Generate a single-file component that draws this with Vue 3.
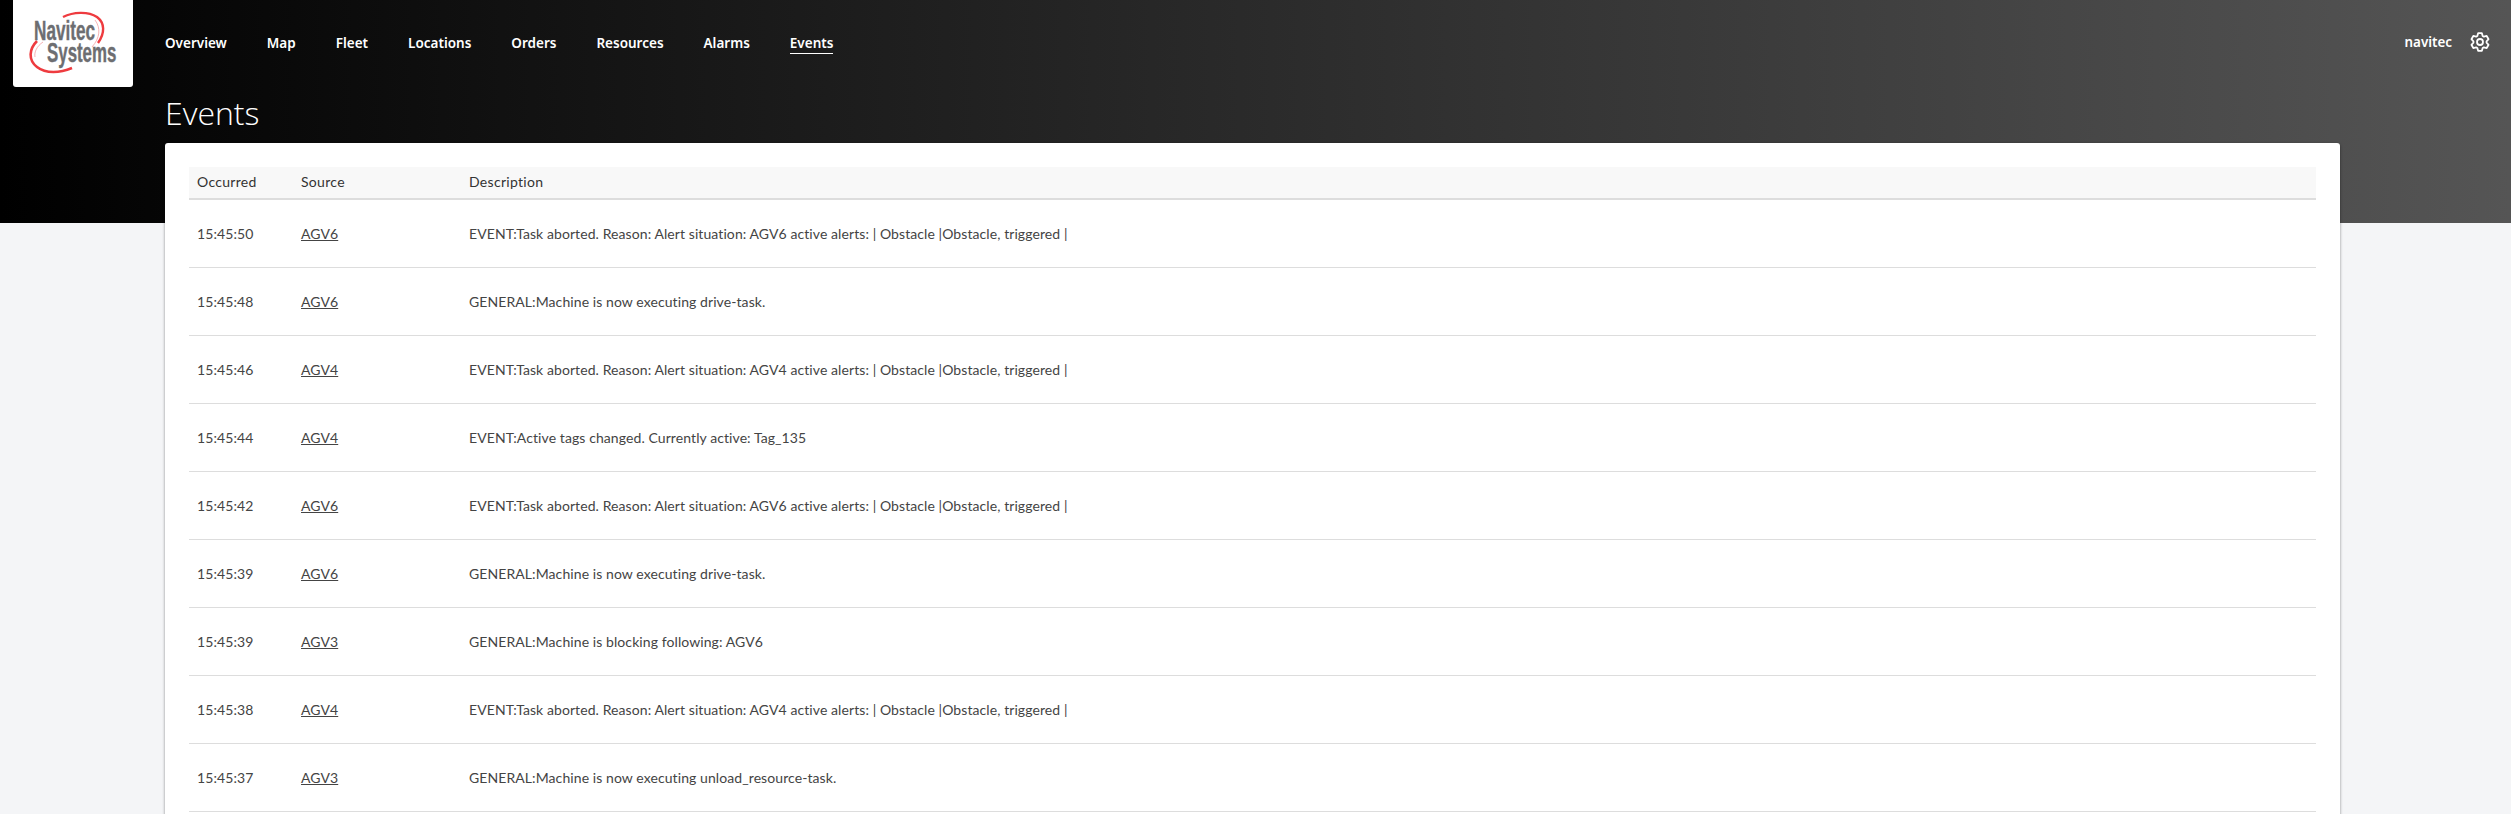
<script setup>
const links = ['Overview', 'Map', 'Fleet', 'Locations', 'Orders', 'Resources', 'Alarms', 'Events']

const taskAborted = (agv) => `EVENT:Task aborted. Reason: Alert situation: ${agv} active alerts: | Obstacle |Obstacle, triggered |`

const events = [
  { time: '15:45:50', source: 'AGV6', text: taskAborted('AGV6') },
  { time: '15:45:48', source: 'AGV6', text: 'GENERAL:Machine is now executing drive-task.' },
  { time: '15:45:46', source: 'AGV4', text: taskAborted('AGV4') },
  { time: '15:45:44', source: 'AGV4', text: 'EVENT:Active tags changed. Currently active: Tag_135' },
  { time: '15:45:42', source: 'AGV6', text: taskAborted('AGV6') },
  { time: '15:45:39', source: 'AGV6', text: 'GENERAL:Machine is now executing drive-task.' },
  { time: '15:45:39', source: 'AGV3', text: 'GENERAL:Machine is blocking following: AGV6' },
  { time: '15:45:38', source: 'AGV4', text: taskAborted('AGV4') },
  { time: '15:45:37', source: 'AGV3', text: 'GENERAL:Machine is now executing unload_resource-task.' },
]

// contorno da engrenagem: 6 dentes
const gearPoints = []
for (let i = 0; i < 6; i++) {
  const a = i * 60 - 90
  for (const [r, d] of [[6.6, -24], [9, -12], [9, 12], [6.6, 24]]) {
    const t = ((a + d) * Math.PI) / 180
    gearPoints.push(`${(r * Math.cos(t)).toFixed(2)},${(r * Math.sin(t)).toFixed(2)}`)
  }
}
const gear = gearPoints.join(' ')
</script>

<template>
  <div class="page">
    <header class="topbar">
      <a class="logo" href="#" aria-label="Navitec Systems">
        <svg width="120" height="87" viewBox="0 0 120 87">
          <path d="M50 17 C60 12 75 11 84 17 C92 23 92 33 85 43" fill="none" stroke="#ee3b3f" stroke-width="2.4" />
          <path d="M82 20 C88 28 87 38 79 47" fill="none" stroke="#f3a0a2" stroke-width="0.8" />
          <path d="M24 41 C16 49 15 60 24 67 C33 74 47 73 59 68" fill="none" stroke="#ee3b3f" stroke-width="2.6" />
          <path d="M30 42 C24 46 21 52 22 57" fill="none" stroke="#f3a0a2" stroke-width="0.8" />
          <text class="logo-text" transform="translate(21 39.5) scale(.635 1)">Navitec</text>
          <text class="logo-text" transform="translate(34 62) scale(.625 1)">Systems</text>
        </svg>
      </a>
      <nav class="nav">
        <a v-for="link in links" :key="link" href="#" :class="{ active: link === 'Events' }">{{ link }}</a>
      </nav>
      <div class="user">
        <span>navitec</span>
        <svg width="20" height="20" viewBox="-10 -10 20 20" fill="none" stroke="#fff" stroke-width="1.8" stroke-linejoin="round">
          <polygon :points="gear" />
          <circle r="3" />
        </svg>
      </div>
    </header>

    <main class="content">
      <h1>Events</h1>
      <section class="card">
        <table>
          <thead>
            <tr>
              <th class="col-time">Occurred</th>
              <th class="col-source">Source</th>
              <th>Description</th>
            </tr>
          </thead>
          <tbody>
            <tr v-for="(ev, i) in events" :key="i">
              <td>{{ ev.time }}</td>
              <td><a href="#">{{ ev.source }}</a></td>
              <td>{{ ev.text }}</td>
            </tr>
          </tbody>
        </table>
      </section>
    </main>
  </div>
</template>

<style>
html, body {
  margin: 0;
  height: 100%;
  overflow: hidden;
  background: #f4f5f7;
}
</style>

<style scoped>
.page {
  height: 814px;
  overflow: hidden;
  font-family: 'Lato', sans-serif;
  background: linear-gradient(90deg, #000 0%, #555 100%) no-repeat top / 100% 223px;
}

/* Barra superior */
.topbar {
  display: flex;
  align-items: flex-start;
  padding: 0 21px 0 13px;
}

.logo {
  display: block;
  width: 120px;
  height: 87px;
  background: #fff;
  border-radius: 0 0 3px 3px;
}

.logo-text {
  font-family: 'Liberation Sans', sans-serif;
  font-size: 27px;
  font-weight: 700;
  fill: #6d6e71;
  stroke: #6d6e71;
  stroke-width: 0.4;
}

.nav {
  display: flex;
  gap: 40px;
  margin-left: 32px;
  padding-top: 34px;
}

.nav a {
  font-family: 'Noto Sans', sans-serif;
  font-size: 13.5px;
  font-weight: 600;
  line-height: 19px;
  color: #fff;
  text-decoration: none;
  border-bottom: 1px solid transparent;
}

.nav a.active {
  border-bottom-color: #fff;
}

.user {
  margin-left: auto;
  padding-top: 32px;
  display: flex;
  align-items: center;
  gap: 18px;
  color: #fff;
  font-family: 'Noto Sans', sans-serif;
  font-size: 13.4px;
  font-weight: 600;
}

/* Conteudo */
.content {
  margin: 0 171px 0 165px;
}

h1 {
  margin: 0;
  height: 56px;
  padding-top: 8px;
  box-sizing: border-box;
  font-family: 'Open Sans', sans-serif;
  font-size: 32px;
  font-weight: 300;
  line-height: 36px;
  color: #fff;
}

.card {
  background: #fff;
  border-radius: 3px;
  box-shadow: 0 1px 3px rgba(0, 0, 0, 0.45);
  padding: 24px 24px 24px;
}

table {
  width: 100%;
  border-collapse: collapse;
  table-layout: fixed;
  font-size: 14px;
  letter-spacing: 0.085px;
  color: #444;
}

th {
  height: 28px;
  padding: 0 8px 3px;
  background: #f8f8f8;
  border-bottom: 2px solid #ddd;
  text-align: left;
  font-weight: 400;
  color: #333;
  letter-spacing: 0.3px;
}

.col-time {
  width: 88px;
}

.col-source {
  width: 152px;
}

td {
  height: 67px;
  padding: 0 8px;
  border-bottom: 1px solid #ddd;
}

td a {
  color: #444;
  text-decoration: underline;
}
</style>
